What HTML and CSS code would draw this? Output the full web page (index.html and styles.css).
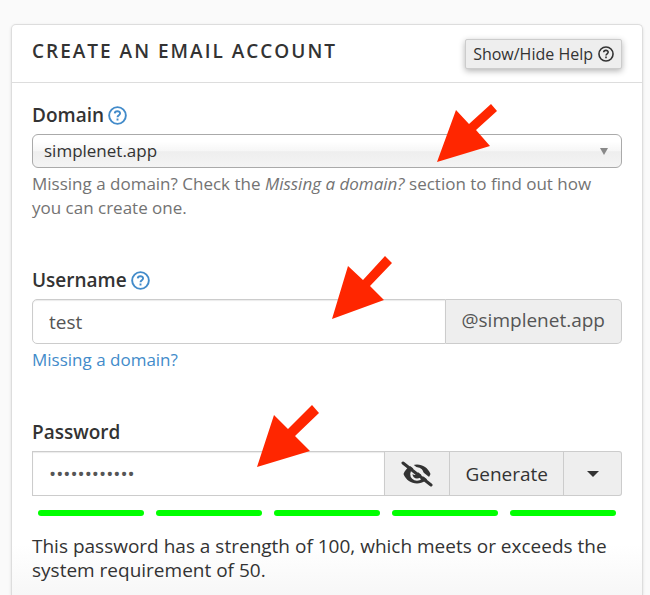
FILE: index.html
```html
<!DOCTYPE html>
<html lang="en">
<head>
    <meta charset="UTF-8">
    <meta name="viewport" content="width=device-width, initial-scale=1.0">
    <title>Create an Email Account</title>
    <link rel="stylesheet" href="styles.css">
</head>
<body>
    <main class="panel">
        <header class="panel-header">
            <h1>CREATE AN EMAIL ACCOUNT</h1>
            <button type="button" class="btn-help">
                Show/Hide Help
                <svg class="help-icon" viewBox="0 0 20 20" aria-hidden="true">
                    <circle cx="10" cy="10" r="8.8"/>
                    <path d="M7.1 7.8C7.3 4.6 12.8 4.7 12.7 7.9C12.6 9.7 10 9.8 10 11.9M10 13.2V15.2"/>
                </svg>
            </button>
        </header>

        <form class="panel-body" id="emailForm">
            <div class="form-group">
                <div class="label-row">
                    <label for="domain">Domain</label>
                    <button type="button" class="btn-info" aria-label="Domain help">
                        <svg class="help-icon" viewBox="0 0 20 20" aria-hidden="true">
                            <circle cx="10" cy="10" r="8.8"/>
                            <path d="M7.1 7.8C7.3 4.6 12.8 4.7 12.7 7.9C12.6 9.7 10 9.8 10 11.9M10 13.2V15.2"/>
                        </svg>
                    </button>
                </div>
                <div class="select-wrap">
                    <select id="domain">
                        <option selected>simplenet.app</option>
                    </select>
                </div>
                <p class="help-text">Missing a domain? Check the <em>Missing a domain?</em> section to find out how you can create one.</p>
                <svg class="arrow arrow-domain" viewBox="0 0 62 64" aria-hidden="true">
                    <polygon points="0,58 19,6 32,20 54,0 60,7 39,26 53,42"/>
                </svg>
            </div>

            <div class="form-group">
                <div class="label-row">
                    <label for="username">Username</label>
                    <button type="button" class="btn-info" aria-label="Username help">
                        <svg class="help-icon" viewBox="0 0 20 20" aria-hidden="true">
                            <circle cx="10" cy="10" r="8.8"/>
                            <path d="M7.1 7.8C7.3 4.6 12.8 4.7 12.7 7.9C12.6 9.7 10 9.8 10 11.9M10 13.2V15.2"/>
                        </svg>
                    </button>
                </div>
                <div class="input-group">
                    <input type="text" id="username" value="test">
                    <span class="addon">@simplenet.app</span>
                </div>
                <p class="help-text"><a href="#domain">Missing a domain?</a></p>
                <svg class="arrow arrow-username" viewBox="0 0 62 64" aria-hidden="true">
                    <polygon points="0,63 16,10 31,24 53,0 60,7 38,30 52,44"/>
                </svg>
            </div>

            <div class="form-group">
                <div class="label-row">
                    <label for="password">Password</label>
                </div>
                <div class="input-group password-group">
                    <input type="password" id="password" value="simplenet100">
                    <button type="button" class="btn-eye" aria-label="Show password">
                        <svg viewBox="0 0 32 26" aria-hidden="true">
                            <path class="eye" fill-rule="evenodd" d="M2.500 13C5 7 10 3.500 16 3.500S27 7 29.500 13C27 19 22 22.500 16 22.500S5 19 2.500 13ZM16 6.200A6.800 6.800 0 1 0 16 19.800A6.800 6.800 0 1 0 16 6.200Z"/>
                            <path class="eye" d="M16 8.500A4.500 4.500 0 1 1 11.500 13A2.400 2.400 0 0 0 16 8.500Z"/>
                            <path class="slash-gap" d="M4 -1L32 21"/>
                            <path class="slash" d="M2 2L30 24"/>
                        </svg>
                    </button>
                    <button type="button" class="btn-generate">Generate</button>
                    <button type="button" class="btn-caret" aria-label="Password generator options">
                        <span class="caret"></span>
                    </button>
                </div>
                <div class="strength">
                    <span></span>
                    <span></span>
                    <span></span>
                    <span></span>
                    <span></span>
                </div>
                <p class="strength-text">This password has a strength of 100, which meets or exceeds the system requirement of 50.</p>
                <svg class="arrow arrow-password" viewBox="0 0 62 64" aria-hidden="true">
                    <polygon points="0,62 17,10 31,24 55,0 62,8 38,31 53,46"/>
                </svg>
            </div>
        </form>
    </main>
</body>
</html>
```

FILE: styles.css
```css
* {
    box-sizing: border-box;
}
body {
    display: flex;
    flex-direction: column;
    min-height: 100vh;
    margin: 0;
    padding: 24px 7px 0 11px;
    font-family: "Open Sans", sans-serif;
    font-size: 19px;
    line-height: 24px;
    color: #333;
    background: #fafafa;
}
h1, p {
    margin: 0;
}
button, input, select {
    font: inherit;
    color: inherit;
}
.panel {
    flex: 1;
    border: 1px solid #ddd;
    border-bottom: 0;
    border-radius: 5px 5px 0 0;
    background: linear-gradient(to top, #f7f7f7, #fff 50px);
    box-shadow: 0 1px 3px rgba(0, 0, 0, 0.12);
}
.panel-header {
    display: flex;
    align-items: center;
    justify-content: space-between;
    height: 58px;
    padding: 0 20px;
    border-bottom: 1px solid #ddd;
}
h1 {
    font-size: 19px;
    font-weight: 600;
    letter-spacing: 2px;
    padding-bottom: 6px;
}
.btn-help {
    display: flex;
    align-items: center;
    gap: 5px;
    height: 30px;
    padding: 0 7px;
    font-size: 16px;
    border: 1px solid #ccc;
    border-radius: 2px;
    background: #eee;
    box-shadow: 0 2px 6px rgba(0, 0, 0, 0.3);
}
.help-icon {
    display: block;
    width: 16px;
    height: 16px;
    fill: none;
    stroke: currentColor;
    stroke-width: 2;
}
.panel-body {
    display: flex;
    flex-direction: column;
    gap: 48px;
    padding: 20px 20px 0;
}
.form-group {
    position: relative;
}
.label-row {
    display: flex;
    align-items: center;
    gap: 4px;
    margin-bottom: 7px;
}
label {
    font-weight: 600;
}
.btn-info {
    padding: 0;
    border: 0;
    background: none;
    color: #428bca;
}
.btn-info .help-icon {
    width: 19px;
    height: 19px;
}
.select-wrap {
    position: relative;
}
.select-wrap::after {
    content: "";
    position: absolute;
    top: 14px;
    right: 14px;
    border: 4px solid transparent;
    border-top: 7px solid #888;
    border-bottom: 0;
    pointer-events: none;
}
select {
    display: block;
    width: 100%;
    height: 34px;
    padding: 0 11px;
    font-size: 17px;
    appearance: none;
    border: 1px solid #aaa;
    border-radius: 6px;
    background: linear-gradient(#fff 20%, #f6f6f6 50%, #eee 52%, #f4f4f4);
}
.help-text {
    margin-top: 4px;
    font-size: 17px;
    color: #737373;
}
a {
    color: #428bca;
    text-decoration: none;
}
.input-group {
    display: flex;
    height: 45px;
}
.input-group > * {
    border: 1px solid #ccc;
    background: #eee;
}
.input-group > * + * {
    border-left: 0;
}
.input-group input {
    flex: 1;
    min-width: 0;
    padding: 0 16px;
    color: #555;
    background: #fff;
    border-radius: 5px 0 0 5px;
    box-shadow: inset 0 1px 1px rgba(0, 0, 0, 0.08);
}
.addon {
    padding: 8px 16px;
    color: #555;
    border-radius: 0 5px 5px 0;
}
.password-group input {
    border-radius: 0;
}
.btn-eye {
    width: 65px;
    padding: 0 16px;
}
.btn-eye svg {
    display: block;
    width: 32px;
    height: 26px;
}
.eye {
    fill: #333;
}
.slash, .slash-gap {
    fill: none;
    stroke: #333;
    stroke-width: 3;
    stroke-linecap: round;
}
.slash-gap {
    stroke: #eee;
}
.btn-generate {
    padding: 0 15px;
}
.btn-caret {
    width: 58px;
    border-radius: 0 3px 3px 0;
}
.caret {
    display: block;
    width: 12px;
    margin: 0 auto;
    border: 6px solid transparent;
    border-top-color: #333;
    border-bottom: 0;
}
.strength {
    display: grid;
    grid-template-columns: repeat(5, 1fr);
    gap: 12px;
    padding: 14px 6px 0;
}
.strength span {
    height: 6px;
    border-radius: 3px;
    background: #0f0;
}
.strength-text {
    margin-top: 18px;
}
/* Pointers over each field */
.arrow {
    position: absolute;
    width: 62px;
    height: 64px;
    fill: #ff2600;
    pointer-events: none;
}
.arrow-domain {
    top: 1px;
    left: 405px;
}
.arrow-username {
    top: -12px;
    left: 300px;
}
.arrow-password {
    top: -15px;
    left: 225px;
}
```
